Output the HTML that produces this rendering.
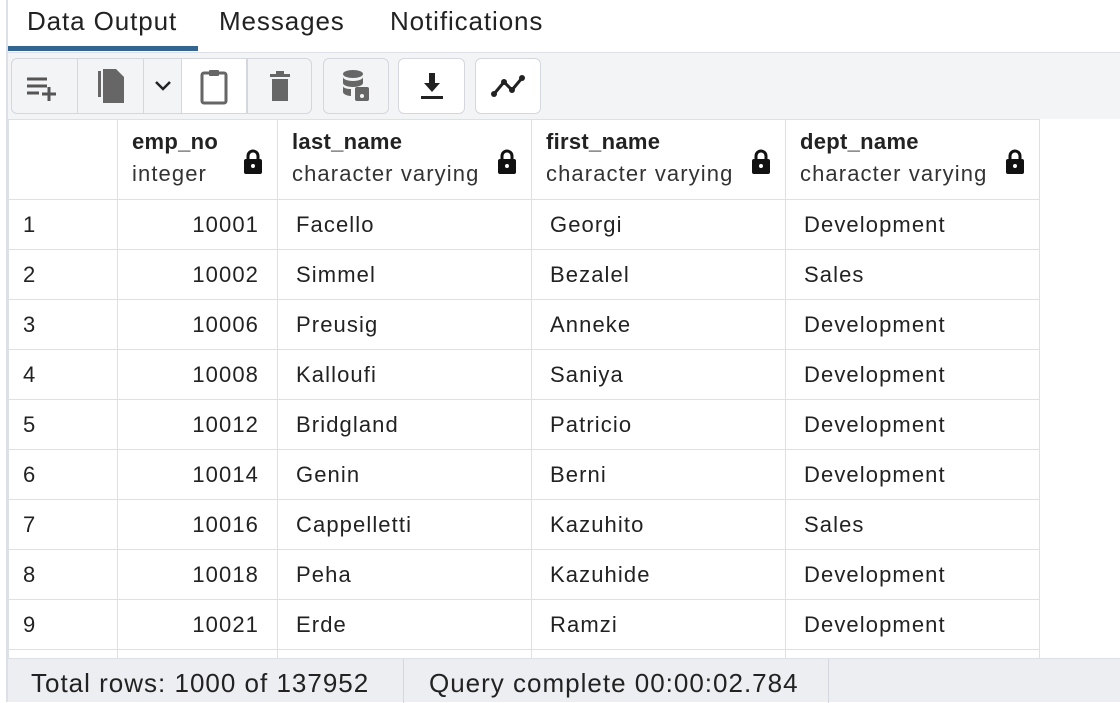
<!DOCTYPE html>
<html><head><style>
*{box-sizing:border-box;margin:0;padding:0}
body{width:1120px;height:702px;overflow:hidden;background:#fff;font-family:"Liberation Sans",sans-serif;color:#222;position:relative}
.lb{position:absolute;left:6px;top:0;width:2px;height:702px;background:#dde0e6}
.tab{position:absolute;top:6px;font-size:26px;color:#222;letter-spacing:0.9px}
.ul{position:absolute;left:8px;top:46px;width:190px;height:5px;background:#326690}
.tb{position:absolute;left:8px;top:52px;width:1112px;height:67px;background:#f3f4f6;border-top:1px solid #dde0e6}
.btn{position:absolute;top:58px;height:56px;border:1px solid #d4d7dd;border-radius:6px;background:#f3f4f6;display:flex;align-items:center;justify-content:center}
.seg{position:absolute;top:0;height:100%;border-left:1px solid #d4d7dd}
table{position:absolute;left:8px;top:119px;border-collapse:collapse;font-size:22px;letter-spacing:1.1px}
td,th{border:1px solid #dde0e6;height:50px;padding:0 18px;text-align:left;font-weight:normal;white-space:nowrap}
th{height:80px;vertical-align:middle;position:relative;padding:0 14px}
th b{display:block;font-size:22px;color:#222;margin-top:-4px;letter-spacing:0.3px}
th span{display:block;font-size:22px;color:#333;margin-top:6px}
th svg{position:absolute;right:14px;top:29px}
td.n{text-align:right}
td:first-child{padding-left:14px}
.sb{position:absolute;left:8px;top:658px;width:1112px;height:44px;background:#eceef2;border-top:1px solid #dde0e6;font-size:26px;color:#222;letter-spacing:1px}
.sb div{position:absolute;top:9px}
</style></head><body>
<div class="lb"></div>
<div class="tab" style="left:27px">Data Output</div>
<div class="tab" style="left:219px">Messages</div>
<div class="tab" style="left:390px">Notifications</div>
<div class="ul"></div>
<div class="tb"></div>
<div class="btn" style="left:11px;width:301px">
 <div class="seg" style="left:65px"></div><div class="seg" style="left:131px"></div><div class="seg" style="left:169px;background:#fff;width:66px;border-right:1px solid #d4d7dd"></div><div class="seg" style="left:235px"></div>
 <svg style="position:absolute;left:13px;top:14px" width="36" height="28" viewBox="0 0 36 28"><path d="M2 6h20M2 13h20M2 20h12M24 14v14M17 21h14" stroke="#555" stroke-width="3" fill="none"/></svg>
 <svg style="position:absolute;left:84px;top:8px" width="30" height="38" viewBox="0 0 30 38"><path d="M2 4v26h3V4z" fill="#666"/><path d="M7 2h13l8 8v26H7z" fill="#666"/></svg>
 <svg style="position:absolute;left:141px;top:20px" width="20" height="14" viewBox="0 0 20 14"><path d="M3 3l7 7 7-7" stroke="#222" stroke-width="2.5" fill="none"/></svg>
 <svg style="position:absolute;left:187px;top:8px" width="30" height="40" viewBox="0 0 30 40"><rect x="3" y="6" width="24" height="30" rx="2" stroke="#666" stroke-width="3" fill="none"/><rect x="10" y="3" width="10" height="6" rx="1" fill="#666"/></svg>
 <svg style="position:absolute;left:256px;top:10px" width="24" height="36" viewBox="0 0 24 36"><rect x="2" y="5" width="20" height="3" fill="#666"/><rect x="8" y="2" width="8" height="3" fill="#666"/><path d="M4 10h16v22H4z" fill="#666"/></svg>
</div>
<div class="btn" style="left:323px;width:66px"><svg width="30" height="34" viewBox="0 0 30 34"><ellipse cx="12" cy="5" rx="10" ry="4" fill="#666"/><path d="M2 8v6c0 2 4 4 10 4s10-2 10-4V8c0 2-4 4-10 4S2 10 2 8zM2 17v6c0 2 4 4 8 4V20c-4 0-8-1-8-3z" fill="#666"/><rect x="14" y="18" width="14" height="14" rx="2" fill="#666"/><circle cx="21" cy="27" r="2" fill="#f3f4f6"/></svg></div>
<div class="btn" style="left:398px;width:67px;background:#fff"><svg width="26" height="30" viewBox="0 0 26 30"><path d="M10 2h6v10h5l-8 9-8-9h5z" fill="#222"/><rect x="2" y="25" width="22" height="3" fill="#222"/></svg></div>
<div class="btn" style="left:475px;width:66px;background:#fff"><svg width="36" height="24" viewBox="0 0 36 24"><path d="M4 20l10-12 8 8 10-12" stroke="#222" stroke-width="3" fill="none"/><circle cx="4" cy="20" r="3" fill="#222"/><circle cx="14" cy="8" r="3" fill="#222"/><circle cx="22" cy="16" r="3" fill="#222"/><circle cx="32" cy="4" r="3" fill="#222"/></svg></div>
<table>
<tr><th style="width:109px"></th>
<th style="width:160px"><b>emp_no</b><span>integer</span><svg width="20" height="26" viewBox="0 0 20 26"><path d="M5 11V7a5 5 0 0110 0v4" stroke="#111" stroke-width="3" fill="none"/><rect x="1" y="10" width="18" height="15" rx="2" fill="#111"/><circle cx="10" cy="17" r="2" fill="#fff"/></svg></th>
<th style="width:254px"><b>last_name</b><span>character varying</span><svg width="20" height="26" viewBox="0 0 20 26"><path d="M5 11V7a5 5 0 0110 0v4" stroke="#111" stroke-width="3" fill="none"/><rect x="1" y="10" width="18" height="15" rx="2" fill="#111"/><circle cx="10" cy="17" r="2" fill="#fff"/></svg></th>
<th style="width:254px"><b>first_name</b><span>character varying</span><svg width="20" height="26" viewBox="0 0 20 26"><path d="M5 11V7a5 5 0 0110 0v4" stroke="#111" stroke-width="3" fill="none"/><rect x="1" y="10" width="18" height="15" rx="2" fill="#111"/><circle cx="10" cy="17" r="2" fill="#fff"/></svg></th>
<th style="width:254px"><b>dept_name</b><span>character varying</span><svg width="20" height="26" viewBox="0 0 20 26"><path d="M5 11V7a5 5 0 0110 0v4" stroke="#111" stroke-width="3" fill="none"/><rect x="1" y="10" width="18" height="15" rx="2" fill="#111"/><circle cx="10" cy="17" r="2" fill="#fff"/></svg></th></tr>
<tr><td>1</td><td class="n">10001</td><td>Facello</td><td>Georgi</td><td>Development</td></tr>
<tr><td>2</td><td class="n">10002</td><td>Simmel</td><td>Bezalel</td><td>Sales</td></tr>
<tr><td>3</td><td class="n">10006</td><td>Preusig</td><td>Anneke</td><td>Development</td></tr>
<tr><td>4</td><td class="n">10008</td><td>Kalloufi</td><td>Saniya</td><td>Development</td></tr>
<tr><td>5</td><td class="n">10012</td><td>Bridgland</td><td>Patricio</td><td>Development</td></tr>
<tr><td>6</td><td class="n">10014</td><td>Genin</td><td>Berni</td><td>Development</td></tr>
<tr><td>7</td><td class="n">10016</td><td>Cappelletti</td><td>Kazuhito</td><td>Sales</td></tr>
<tr><td>8</td><td class="n">10018</td><td>Peha</td><td>Kazuhide</td><td>Development</td></tr>
<tr><td>9</td><td class="n">10021</td><td>Erde</td><td>Ramzi</td><td>Development</td></tr>
<tr><td></td><td></td><td></td><td></td><td></td></tr>
</table>
<div class="sb">
<div style="left:23px">Total rows: 1000 of 137952</div>
<div style="left:395px;top:0;height:44px;border-left:1px solid #d4d7dd"></div>
<div style="left:421px">Query complete 00:00:02.784</div>
<div style="left:820px;top:0;height:44px;border-left:1px solid #d4d7dd"></div>
</div>
</body></html>
